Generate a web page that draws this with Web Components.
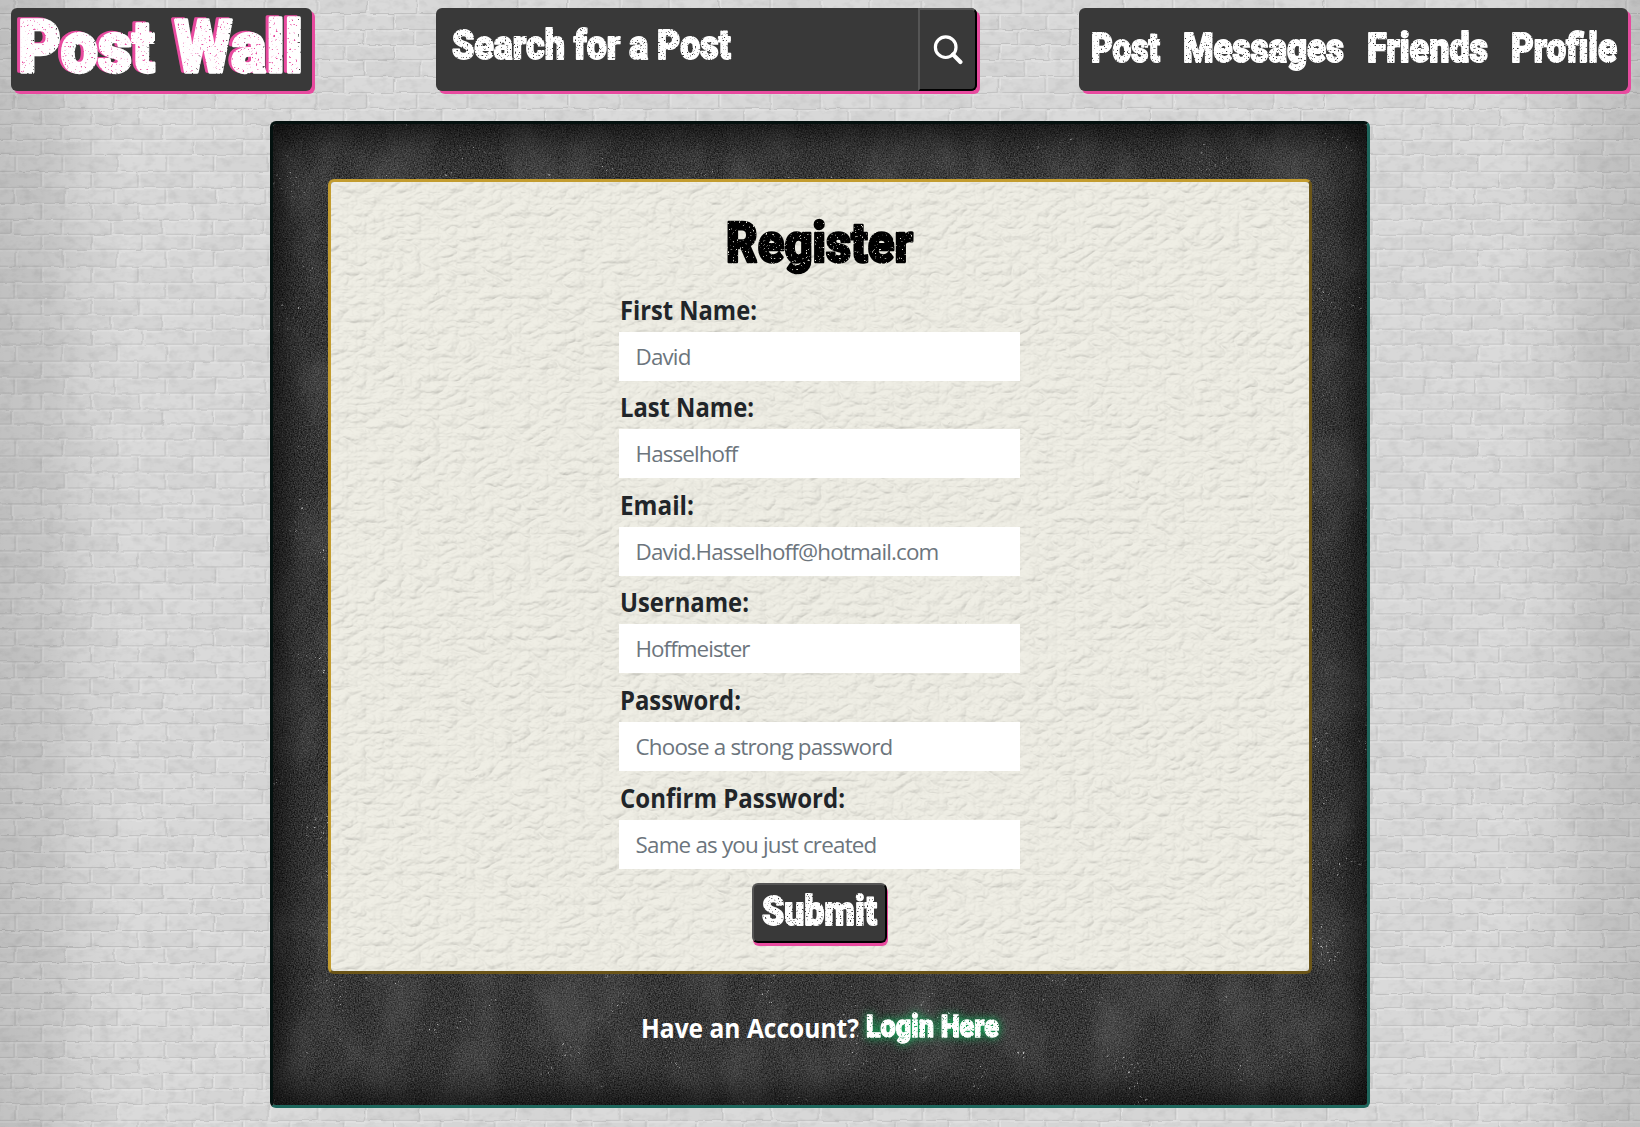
<!DOCTYPE html>
<html lang="en">
<head>
<meta charset="utf-8">
<title>Post Wall</title>
<style>
html,body{margin:0;height:100%;overflow:hidden}
body{font-family:"Open Sans","Noto Sans",sans-serif;color:#212529}
</style>
</head>
<body>
<post-wall></post-wall>
<script>
const define = (name, render) => customElements.define(name, class extends HTMLElement {
  connectedCallback() {
    if (this.shadowRoot) return;
    this.attachShadow({mode: 'open'}).innerHTML = render(this);
  }
});

const measure = (font, text) => {
  const ctx = document.createElement('canvas').getContext('2d');
  ctx.font = font;
  return ctx.measureText(text).width;
};

// Brick wall, one repeating tile plus the shading at both sides.
define('brick-wall', () => {
  const rows = [[-2,16,[15,65,115]],[14,16,[42,92,140]],[30,15,[12,62,112]],[45,15,[42,92,143]],[60,17,[16,63,118]],[77,16,[42,92,139]],[93,16,[15,65,115]]];
  const shades = ['#d5d5d5','#dadada','#d8d8d8'];
  let s = '';
  rows.forEach(([y,h,xs], r) => {
    xs.forEach((x,i) => {
      const w = (i < 2 ? xs[i+1] : xs[0] + 151.2) - x;
      for (const o of [0,-151.2]) {
        s += `<rect x="${x+o}" y="${y}" width="${w}" height="${h}" fill="${shades[(r*2+i)%3]}"/>`;
        s += `<path d="M${x+o+1} ${y+h-2}V${y+1}H${x+o+w-2}" fill="none" stroke="#e6e6e6" stroke-width="1"/>`;
        s += `<path d="M${x+o+3} ${y+h-.5}H${x+o+w-1}V${y+2}" fill="none" stroke="#c2c2c2" stroke-width="1"/>`;
      }
    });
  });
  return `<style>:host{display:block}svg{display:block;width:1640px;height:1127px}</style>
  <svg viewBox="0 0 1640 1127" aria-hidden="true"><defs>
    <pattern id="b" width="151.2" height="94.9" patternUnits="userSpaceOnUse">${s}</pattern>
    <filter id="r" x="0" y="0" width="1640" height="1127" filterUnits="userSpaceOnUse" color-interpolation-filters="sRGB">
      <feTurbulence type="fractalNoise" baseFrequency=".07" numOctaves="2" seed="4" result="n"/>
      <feDisplacementMap in="SourceGraphic" in2="n" scale="3.5" xChannelSelector="R" yChannelSelector="G" result="d"/>
      <feTurbulence type="fractalNoise" baseFrequency=".09 .14" numOctaves="3" seed="9"/>
      <feColorMatrix values="0 0 0 0 .45  0 0 0 0 .45  0 0 0 0 .45  .3 0 0 0 -.135" result="g"/>
      <feMerge><feMergeNode in="d"/><feMergeNode in="g"/></feMerge>
    </filter>
    <linearGradient id="s"><stop offset="0" stop-color="#000" stop-opacity=".11"/><stop offset=".03" stop-color="#000" stop-opacity=".085"/><stop offset=".05" stop-color="#000" stop-opacity=".035"/><stop offset=".08" stop-color="#000" stop-opacity="0"/><stop offset=".92" stop-color="#000" stop-opacity="0"/><stop offset=".95" stop-color="#000" stop-opacity=".035"/><stop offset=".97" stop-color="#000" stop-opacity=".085"/><stop offset="1" stop-color="#000" stop-opacity=".11"/></linearGradient>
  </defs>
  <rect width="1640" height="1127" fill="#d7d7d7"/>
  <rect width="1640" height="1127" fill="url(#b)" filter="url(#r)"/>
  <rect width="1640" height="1127" fill="url(#s)"/></svg>`;
});

// Chalkboard surface: fine grain, cloudy patches and scattered chalk specks.
define('chalk-surface', () => `<style>:host{display:block}svg{display:block;width:100%;height:100%}</style>
  <svg aria-hidden="true"><defs>
    <filter id="c" x="0" y="0" width="1" height="1" color-interpolation-filters="sRGB">
      <feTurbulence type="fractalNoise" baseFrequency=".75" numOctaves="2" seed="3"/>
      <feColorMatrix values=".42 0 0 0 0  .42 0 0 0 0  .42 0 0 0 0  0 0 0 0 1" result="grain"/>
      <feTurbulence type="fractalNoise" baseFrequency=".022 .013" numOctaves="4" seed="12"/>
      <feColorMatrix values="0 0 0 0 .5  0 0 0 0 .5  0 0 0 0 .5  .55 0 0 0 -.22" result="cloud"/>
      <feTurbulence type="fractalNoise" baseFrequency=".36" numOctaves="2" seed="21"/>
      <feColorMatrix values="0 0 0 0 .75  0 0 0 0 .75  0 0 0 0 .75  10 0 0 0 -6.9" result="speck"/>
      <feTurbulence type="fractalNoise" baseFrequency=".025" numOctaves="2" seed="6"/>
      <feColorMatrix values="0 0 0 0 1  0 0 0 0 1  0 0 0 0 1  0 7 0 0 -4.1" result="zone"/>
      <feComposite in="speck" in2="zone" operator="in" result="chalk"/>
      <feMerge><feMergeNode in="grain"/><feMergeNode in="cloud"/><feMergeNode in="chalk"/></feMerge>
    </filter></defs><rect width="100%" height="100%" filter="url(#c)"/></svg>`);

// Cream leather surface.
define('leather-surface', () => `<style>:host{display:block}svg{display:block;width:100%;height:100%}</style>
  <svg aria-hidden="true"><defs>
    <filter id="l" x="0" y="0" width="1" height="1" color-interpolation-filters="sRGB">
      <feTurbulence type="turbulence" baseFrequency=".055 .085" numOctaves="3" seed="8" result="t"/>
      <feColorMatrix in="t" values="0 0 0 0 0  0 0 0 0 0  0 0 0 0 0  1 0 0 0 0"/>
      <feDiffuseLighting surfaceScale="1.5" diffuseConstant="1.04" lighting-color="#eeede5"><feDistantLight azimuth="235" elevation="76"/></feDiffuseLighting>
      <feComponentTransfer><feFuncR type="linear" slope=".55" intercept=".408"/><feFuncG type="linear" slope=".55" intercept=".406"/><feFuncB type="linear" slope=".55" intercept=".388"/></feComponentTransfer>
    </filter></defs><rect width="100%" height="100%" filter="url(#l)"/></svg>`);

// Text scaled to an exact width; "worn" eats small holes into the letters.
define('set-text', el => {
  const a = n => el.getAttribute(n), w = +a('w'), size = +a('size'), h = +a('h'), worn = el.hasAttribute('worn');
  const shadow = el.hasAttribute('pink'), glow = el.hasAttribute('glow'), color = a('color') || '#fff';
  const text = el.textContent, word = +(a('word') || 0);
  const scale = w / (measure(worn ? `900 ${size}px Roboto` : `700 ${size}px "Open Sans"`, text) + word * (text.split(' ').length - 1));
  return `<style>:host{display:block;flex:none;width:${w}px;height:${h}px}svg{display:block;overflow:visible}
    text{font-family:${worn ? 'Roboto' : '"Open Sans","Noto Sans"'},sans-serif;font-weight:${worn ? 900 : 700};font-size:${size}px;word-spacing:${word}px;fill:${color};
    ${worn ? `stroke:${color};stroke-width:${size*.045}px;stroke-linejoin:round` : ''}}</style>
  <svg width="${w}" height="${h}">${worn ? `<defs><filter id="g" x="-24" y="-24" width="${w+48}" height="${h+48}" filterUnits="userSpaceOnUse" color-interpolation-filters="sRGB">
      <feTurbulence type="fractalNoise" baseFrequency="${size > 50 ? .45 : .6}" numOctaves="2" seed="${Math.round(w)}" result="n"/>
      <feColorMatrix in="n" values="0 0 0 0 1  0 0 0 0 1  0 0 0 0 1  -7 0 0 0 ${size > 50 ? 5.55 : 5.4}" result="fine"/>
      <feComposite in="SourceGraphic" in2="fine" operator="in" result="ink"/>
      ${shadow ? '<feFlood flood-color="#e84a9f"/><feComposite in2="SourceAlpha" operator="in"/><feOffset dx="-3" dy="-1" result="sh"/>' : ''}
      ${glow ? '<feGaussianBlur in="SourceAlpha" stdDeviation="5"/><feColorMatrix values="0 0 0 0 .08  0 0 0 0 .68  0 0 0 0 .36  0 0 0 1.1 0" result="sh"/>' : ''}
      <feMerge>${shadow || glow ? '<feMergeNode in="sh"/>' : ''}<feMergeNode in="ink"/></feMerge>
    </filter></defs>` : ''}<g${worn ? ' filter="url(#g)"' : ''}><text x="0" y="${a('base')}" transform="scale(${scale.toFixed(4)} 1)">${text}</text></g></svg>`;
});

define('dark-plate', () => `<style>:host{display:flex;box-sizing:border-box;height:83px;background:#393939;border-radius:6px;box-shadow:3px 3px 0 #e84a9f}</style><slot></slot>`);

define('search-bar', () => `<style>:host{display:block;width:541px}
  dark-plate{justify-content:space-between}
  .q{padding:19px 0 0 16px}
  button{box-sizing:border-box;width:59px;height:83px;padding:0;border:2px solid;border-color:#555 #000 #000 #555;border-radius:0 6px 6px 0;background:#393939;display:flex;align-items:center;justify-content:center}
  svg{display:block}</style>
  <dark-plate><div class="q"><set-text worn w="279" h="36" size="40" base="31.5">Search for a Post</set-text></div>
  <button aria-label="Search"><svg width="30" height="30" viewBox="0 0 30 30" fill="none" stroke="#fff" stroke-linecap="round"><circle cx="12.7" cy="12.2" r="10.3" stroke-width="3.2"/><path d="M20.1 19.6L27.4 27" stroke-width="4.2"/></svg></button></dark-plate>`);

define('nav-menu', () => `<style>:host{display:block;width:549px}
  dark-plate{padding:22px 11px 0 12px;justify-content:space-between}a{color:#fff;text-decoration:none}</style>
  <dark-plate>${[['Post',69],['Messages',161],['Friends',121],['Profile',106]].map(([t,w]) => `<a><set-text worn w="${w}" h="38" size="40" base="32">${t}</set-text></a>`).join('')}</dark-plate>`);

define('form-field', el => {
  const a = n => el.getAttribute(n), hint = a('hint');
  const gap = (+a('hint-width') - measure('22.4px "Open Sans"', hint)) / hint.length;
  return `<style>:host{display:flex;flex-direction:column;width:401px;height:97.6px}
  label{box-sizing:border-box;padding:11px 0 0 1px;height:45px}
  input{box-sizing:border-box;width:401px;height:49px;border:0;border-radius:0;margin:0;padding:0 17px;background:#fff;font:22.4px "Open Sans","Noto Sans",sans-serif;letter-spacing:${gap.toFixed(3)}px}
  input::placeholder{color:#6c757d;opacity:1}</style>
  <label><set-text w="${a('label-width')}" h="30" size="27.6" base="22.3" color="#212529">${a('label')}</set-text></label>
  <input placeholder="${hint}">`;
});

define('submit-button', () => `<style>:host{display:block}
  button{display:block;box-sizing:border-box;width:135px;height:60px;padding:6px 8px 10px;margin:0;border:2px solid;border-color:#555 #000 #000 #555;border-radius:6px;background:#393939;box-shadow:1px 3px 0 #e84a9f}</style>
  <button><set-text worn w="115" h="36" size="40" base="32">Submit</set-text></button>`);

define('register-card', () => `<style>
  :host{display:grid;box-sizing:border-box;width:984px;height:795px;border:3px solid;border-color:#c39c2f #6b5518 #6b5518 #c39c2f;border-radius:6px;overflow:hidden}
  leather-surface,.body{grid-area:1/1}
  .body{z-index:1;display:flex;flex-direction:column;align-items:center;padding:36px 2px 0 0}
  .fields{padding-top:12.7px;height:596.3px}</style>
  <leather-surface></leather-surface>
  <div class="body"><set-text worn w="187" h="56" size="55.5" base="44">Register</set-text>
  <div class="fields">
    <form-field label="First Name:" label-width="137" hint="David" hint-width="55"></form-field>
    <form-field label="Last Name:" label-width="134" hint="Hasselhoff" hint-width="102"></form-field>
    <form-field label="Email:" label-width="74" hint="David.Hasselhoff@hotmail.com" hint-width="303"></form-field>
    <form-field label="Username:" label-width="129" hint="Hoffmeister" hint-width="114"></form-field>
    <form-field label="Password:" label-width="121" hint="Choose a strong password" hint-width="257"></form-field>
    <form-field label="Confirm Password:" label-width="225" hint="Same as you just created" hint-width="241"></form-field>
  </div><submit-button></submit-button></div>`.replace('base="44"', 'base="44" color="#000"'));

define('board-panel', () => `<style>
  :host{display:grid;box-sizing:border-box;width:1100px;height:987px;border:3px solid;border-color:#04110f #1d665c #1d665c #04110f;border-radius:6px;overflow:hidden}
  chalk-surface,.shade,.body{grid-area:1/1}
  .shade{box-shadow:inset 0 0 38px 8px rgba(0,0,0,.8);z-index:1}
  .body{z-index:2;padding:55px;display:flex;flex-direction:column;align-items:center}
  .login{display:flex;gap:7px;padding-top:37px}</style>
  <chalk-surface></chalk-surface><div class="shade"></div>
  <div class="body"><register-card></register-card>
  <div class="login"><set-text w="218" h="36" size="27.6" base="26.5">Have an Account?</set-text><set-text worn glow w="133" h="36" size="31" base="26">Login Here</set-text></div></div>`);

define('post-wall', () => `<style>
  :host{display:grid;width:1640px;height:1127px;overflow:hidden}
  brick-wall,.page{grid-area:1/1}
  .page{z-index:1;display:flex;flex-direction:column}
  header{display:flex;justify-content:space-between;padding:8px 12px 30px 11px}
  .brand{width:301px;padding:5px 0 0 7px;box-sizing:border-box}
  search-bar{margin-left:22px}
  board-panel{margin-left:270px}</style>
  <brick-wall></brick-wall>
  <div class="page"><header>
    <dark-plate class="brand"><set-text worn pink w="285" h="70" size="73" word="4" base="59">Post Wall</set-text></dark-plate>
    <search-bar></search-bar><nav-menu></nav-menu></header>
    <board-panel></board-panel></div>`);
</script>
</body>
</html>
